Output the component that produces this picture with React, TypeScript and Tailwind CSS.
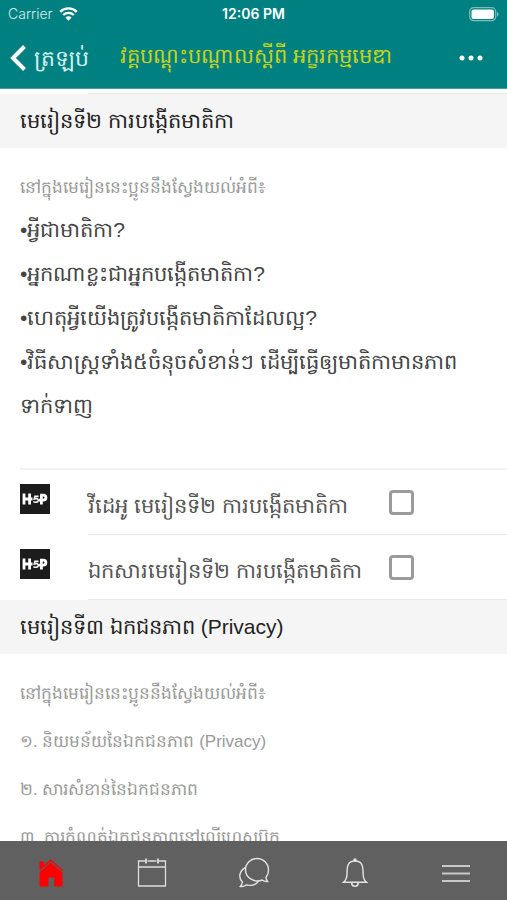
import React from "react";

const activities = [
  { id: "video", title: "វីដេអូ មេរៀនទី២ ការបង្កើតមាតិកា" },
  { id: "document", title: "ឯកសារមេរៀនទី២ ការបង្កើតមាតិកា" },
];

const goals = [
  "•អ្វីជាមាតិកា?",
  "•អ្នកណាខ្លះជាអ្នកបង្កើតមាតិកា?",
  "•ហេតុអ្វីយើងត្រូវបង្កើតមាតិកាដែលល្អ?",
  "•វិធីសាស្ត្រទាំង៥ចំនុចសំខាន់ៗ ដើម្បីធ្វើឲ្យមាតិកាមានភាពទាក់ទាញ",
];

const privacyTopics = [
  "នៅក្នុងមេរៀននេះប្អូននឹងស្វែងយល់អំពី៖",
  "១. និយមន័យនៃឯកជនភាព (Privacy)",
  "២. សារសំខាន់នៃឯកជនភាព",
  "៣. ការកំណត់ឯកជនភាពនៅលើហ្វេសប៊ុក",
];

function StatusBar() {
  return (
    <div className="grid h-7 grid-cols-3 items-center px-2 font-['Inter',sans-serif] text-sm text-white">
      <div className="flex items-center gap-1.5">
        <span className="text-[#d5ecec]">Carrier</span>
        <svg width="19" height="14" viewBox="0 0 19 14" fill="none" stroke="white" aria-hidden="true">
          <path d="M1.2 4.8a11.8 11.8 0 0 1 16.6 0" strokeWidth="2.4" />
          <path d="M4.2 8a7.6 7.6 0 0 1 10.6 0" strokeWidth="2.4" />
          <path d="M6.4 10.6a4.5 4.5 0 0 1 6.2 0L9.5 13.8Z" fill="white" stroke="none" />
        </svg>
      </div>
      <span className="text-center font-semibold">12:06 PM</span>
      <svg className="justify-self-end" width="30" height="15" viewBox="0 0 30 15" aria-hidden="true">
        <rect x="0.7" y="0.7" width="26" height="13" rx="4" fill="none" stroke="#7fbcbc" strokeWidth="1.2" />
        <rect x="2.5" y="2.5" width="22.4" height="9.4" rx="2" fill="white" />
        <path d="M28 4.8c2 1 2 4 0 5Z" fill="#7fbcbc" />
      </svg>
    </div>
  );
}

function H5PIcon() {
  return (
    <svg className="size-[30px] shrink-0" viewBox="0 0 30 30" aria-label="H5P" role="img">
      <rect width="30" height="30" fill="#1c1c1c" />
      <g fill="none" stroke="white">
        <path d="M4 9.5v11M9.6 9.5v11M4 15h8.500" strokeWidth="2.8" />
        <path d="M18.500 12.400h-3.600l-.6 2.600c2.400-.9 4-.1 4 1.500 0 1.900-3.200 2.300-5 1.100" strokeWidth="1.600" />
        <path d="M21.400 20.500v-9.400h2c3.400 0 3.400 5 0 5h-4.400" strokeWidth="2.800" />
      </g>
    </svg>
  );
}

function SectionTitle({ children }: { children: React.ReactNode }) {
  return (
    <h2 className="flex h-[54px] items-center bg-[#f5f5f5] px-5 text-[21px] text-[#222]">{children}</h2>
  );
}

function BottomNav() {
  const item = "flex flex-1 items-center justify-center";
  return (
    <nav className="flex h-[59px] shrink-0 bg-[#606060] pt-1">
      <a href="#home" aria-label="Home" className={item}>
        <svg width="26" height="30" viewBox="0 0 26 30" aria-hidden="true">
          <path d="M1.500 11V3.500H6v3.600L12.700 1.200 25 12.300l-.8.900L12.700 3 2 12.600Z" fill="red" />
          <path d="M1.500 14.200 12.700 4.400 24.500 14.800v13.700h-8.300v-9h-5.700v9h-9Z" fill="red" />
        </svg>
      </a>
      <a href="#calendar" aria-label="Calendar" className={item}>
        <svg width="30" height="30" viewBox="0 0 30 30" fill="none" stroke="#ddd" strokeWidth="1.300" aria-hidden="true">
          <path d="M8 3H1.500v25h27V3H22M10.500 3h9M1.500 9h27" />
          <path d="M9 .5v5M21 .5v5" strokeWidth="1.800" />
        </svg>
      </a>
      <a href="#messages" aria-label="Messages" className={item}>
        <svg width="32" height="32" viewBox="0 0 32 32" fill="none" stroke="#e4e4e4" strokeWidth="1.400" aria-hidden="true">
          <path d="M29.500 24.500c-2.200.2-4-.3-5.300-1.500C17 26.200 7.500 21 7.500 13A11.500 11.500 0 0 1 30.500 13c0 3-1 5.500-2.500 7.300.2 1.700.6 3 1.500 4.200Z" />
          <path d="M7.800 10.200C.8 14.500.2 20.700 4.400 25c-.3 2-1 3.500-2 4.500 2.600.2 4.700-.4 6.200-1.700 4.500 1.300 9.200.2 12-3.700" />
        </svg>
      </a>
      <a href="#notifications" aria-label="Notifications" className={item}>
        <svg width="26" height="30" viewBox="0 0 26 30" fill="none" stroke="#e4e4e4" strokeWidth="1.400" aria-hidden="true">
          <circle cx="13" cy="2" r="1" fill="white" />
          <path d="M1.500 24.300h23c-2.500-2-3.300-4.500-3.400-8.300 0-7.500-.6-13-8.100-13S5 8.500 5 16c-.1 3.800-1 6.300-3.500 8.300Z" />
          <path d="M9.800 24.800c0 4.600 6.400 4.600 6.400 0" strokeWidth="1.700" />
        </svg>
      </a>
      <a href="#menu" aria-label="Menu" className={item}>
        <svg width="28" height="20" viewBox="0 0 28 20" stroke="#c8c8c8" strokeWidth="2" aria-hidden="true">
          <path d="M0 3h28M0 10.500h28M0 18h28" />
        </svg>
      </a>
    </nav>
  );
}

export default function App() {
  return (
    <div className="flex h-screen flex-col overflow-hidden bg-white font-['Liberation_Sans','Noto_Sans',sans-serif] font-light text-[#444]">
      <header className="shrink-0 border-b border-[#4a9b9b] bg-[#008080]">
        <StatusBar />
        <div className="flex h-[60px] items-center px-2.5">
          <button type="button" className="flex w-[110px] shrink-0 items-center gap-2 text-[22px] text-[#d5f2f2]">
            <svg width="16" height="26" viewBox="0 0 16 26" fill="none" stroke="white" strokeWidth="4" aria-hidden="true">
              <path d="M14.500 1.500 3 13l11.500 11.500" />
            </svg>
            <span className="whitespace-nowrap">ត្រឡប់</span>
          </button>
          <h1 className="min-w-0 flex-1 whitespace-nowrap pb-1 text-[21px] text-[#c8d419]">
            វគ្គបណ្តុះបណ្តាលស្តីពី អក្ខរកម្មមេឌា
          </h1>
          <button type="button" aria-label="More" className="mr-3.5 shrink-0">
            <svg width="24" height="6" viewBox="0 0 24 6" fill="white" aria-hidden="true">
              <circle cx="3" cy="3" r="2.500" />
              <circle cx="12" cy="3" r="2.500" />
              <circle cx="21" cy="3" r="2.500" />
            </svg>
          </button>
        </div>
      </header>

      <main className="min-h-0 flex-1 overflow-y-auto pt-1 [scrollbar-width:none]">
        <div className="ml-[88px] h-px bg-[#e4e9e2]" />
        <section>
          <SectionTitle>មេរៀនទី២ ការបង្កើតមាតិកា</SectionTitle>
          <div className="px-5 pt-5">
            <p className="text-[17px] leading-10 text-[#999]">នៅក្នុងមេរៀននេះប្អូននឹងស្វែងយល់អំពី៖</p>
            {goals.map((goal) => (
              <p key={goal} className="text-[21px] leading-[44px]">
                {goal}
              </p>
            ))}
          </div>
          <ul className="mt-10 ml-5 border-t-2 border-[#f1f1f1]">
            {activities.map((activity) => (
              <li key={activity.id} className="flex h-[65px]">
                <div className="w-[68px] shrink-0 pt-3.5">
                  <H5PIcon />
                </div>
                <div className="flex flex-1 border-b border-[#e8e8e8]">
                  <label htmlFor={activity.id} className="flex w-[301px] items-center whitespace-nowrap pt-2 text-[21px] text-[#555]">
                    {activity.title}
                  </label>
                  <input
                    id={activity.id}
                    type="checkbox"
                    className="mt-5 size-[25px] shrink-0 appearance-none rounded border-3 border-[#9b9b9b] bg-white checked:bg-[#008080]"
                  />
                </div>
              </li>
            ))}
          </ul>
        </section>
        <section>
          <SectionTitle>មេរៀនទី៣ ឯកជនភាព (Privacy)</SectionTitle>
          <div className="px-5 pt-4">
            {privacyTopics.map((topic) => (
              <p key={topic} className="whitespace-nowrap text-[17px] leading-[48px] text-[#999]">
                {topic}
              </p>
            ))}
          </div>
        </section>
      </main>
      <BottomNav />
    </div>
  );
}
